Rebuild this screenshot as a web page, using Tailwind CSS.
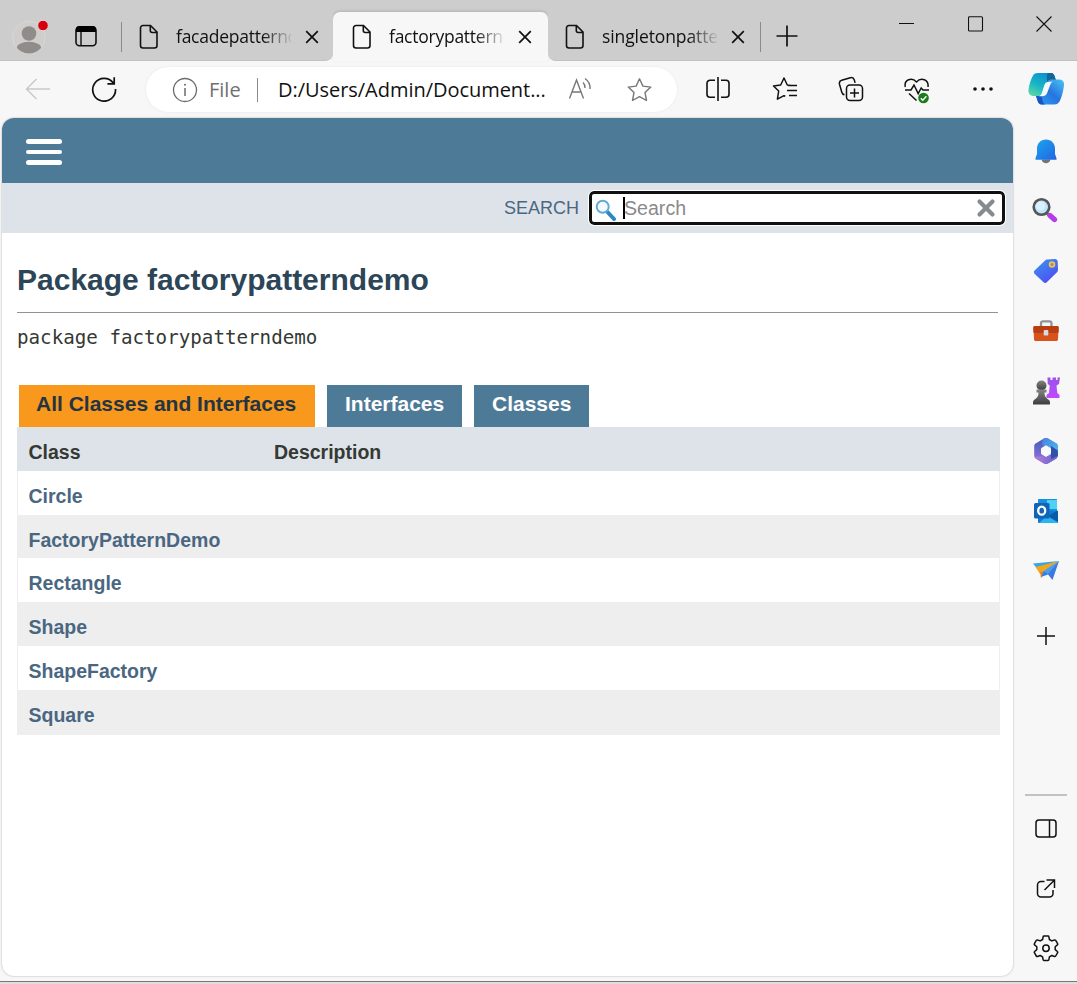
<!DOCTYPE html>
<html lang="en">
<head>
<meta charset="utf-8">
<title>factorypatterndemo</title>
<script src="https://cdn.jsdelivr.net/npm/@tailwindcss/browser@4"></script>
</head>
<body class="w-[1077px] h-[984px] overflow-hidden bg-[#f7f7f7] font-['Liberation_Sans',sans-serif] flex flex-col">
<svg class="hidden">
  <symbol id="doc" viewBox="0 0 20 26"><path d="M4 1.500h7.500l6.500 6.500v13.500a2.500 2.500 0 0 1-2.500 2.500H4a2.500 2.500 0 0 1-2.500-2.500V4A2.500 2.500 0 0 1 4 1.500zM11.300 1.800v4.700a2 2 0 0 0 2 2H18" fill="none" stroke="#111" stroke-width="1.600"/></symbol>
  <symbol id="close" viewBox="0 0 14 14"><path d="M1.200 1.200l11.600 11.600M12.800 1.200L1.200 12.800" fill="none" stroke="#111" stroke-width="1.700"/></symbol>
</svg>

<!-- title bar -->
<header class="h-[61px] flex shrink-0">
  <div class="w-[333px] bg-[#cdcdcd] rounded-br-lg border-b border-[#c2c2c2] flex items-center pt-[13px] relative">
    <svg class="ml-3 w-9 h-9 shrink-0" viewBox="0 0 36 36"><defs><clipPath id="av"><circle cx="17" cy="18.500" r="16"/></clipPath></defs><circle cx="17" cy="18.500" r="16.300" fill="#d0cecc" stroke="#dad8d6"/><g clip-path="url(#av)" fill="#8f8c89"><circle cx="17" cy="14.500" r="7.300"/><ellipse cx="17" cy="30" rx="12.500" ry="7.300"/></g><circle cx="31" cy="6.500" r="5.300" fill="#d9000d" stroke="#dedede"/></svg>
    <svg class="ml-[26px] -mt-px w-6 h-6 shrink-0" viewBox="0 0 24 24"><rect x="2" y="2.800" width="20" height="19" rx="3.500" fill="none" stroke="#111" stroke-width="1.600"/><path d="M2 8V5.500A3.500 3.500 0 0 1 5.500 2h13A3.500 3.500 0 0 1 22 5.500V8z" fill="#000"/><path d="M7 8v13.500" stroke="#111" stroke-width="1.400"/></svg>
    <div class="ml-[23px] w-px h-[30px] bg-[#8a8a8a]"></div>
    <svg class="ml-[17px] w-5 h-[26px] shrink-0"><use href="#doc"/></svg>
    <div class="ml-[17px] w-[115px] h-[30px] overflow-hidden whitespace-nowrap font-['Open_Sans',sans-serif] text-[17.500px] tracking-[-0.250px] leading-[29px] text-[#111] mask-r-from-75% mask-r-to-102%">facadepatterndemo</div>
    <svg class="ml-[14px] w-[14px] h-[14px] shrink-0"><use href="#close"/></svg>
  </div>
  <div class="w-[215px] bg-[#cdcdcd] pt-3 flex">
    <div class="w-[215px] rounded-t-[7px] bg-[#f7f7f7] shadow-[0_-1px_3px_#0002] flex items-center pt-px">
      <svg class="ml-[19px] w-5 h-[26px] shrink-0"><use href="#doc"/></svg>
      <div class="ml-[17px] w-[115px] h-[30px] overflow-hidden whitespace-nowrap font-['Open_Sans',sans-serif] text-[17.500px] tracking-[-0.250px] leading-[29px] text-[#111] mask-r-from-75% mask-r-to-102%">factorypatterndemo</div>
      <svg class="ml-[14px] w-[14px] h-[14px] shrink-0"><use href="#close"/></svg>
    </div>
  </div>
  <div class="flex-1 bg-[#cdcdcd] rounded-bl-lg border-b border-[#c2c2c2] flex items-start">
    <div class="flex items-center h-[61px] pt-[13px]">
      <svg class="ml-[17px] w-5 h-[26px] shrink-0"><use href="#doc"/></svg>
      <div class="ml-[17px] w-[115px] h-[30px] overflow-hidden whitespace-nowrap font-['Open_Sans',sans-serif] text-[17.500px] tracking-[-0.100px] leading-[29px] text-[#111] mask-r-from-75% mask-r-to-102%">singletonpatterndemo</div>
      <svg class="ml-[14px] w-[14px] h-[14px] shrink-0"><use href="#close"/></svg>
      <div class="ml-[15px] w-px h-[30px] bg-[#8a8a8a]"></div>
      <svg class="ml-[15px] mb-[3px] w-[22px] h-[22px]" viewBox="0 0 22 22"><path d="M11 .500v21M.500 11h21" stroke="#111" stroke-width="1.700"/></svg>
    </div>
    <svg class="ml-[101px] mt-4 w-4 h-4" viewBox="0 0 16 16"><path d="M0 7.500h15" stroke="#111"/></svg>
    <svg class="ml-[53px] mt-4 w-4 h-4" viewBox="0 0 16 16"><rect x=".500" y=".700" width="14" height="14.300" rx="1" fill="none" stroke="#111" stroke-width="1.100"/></svg>
    <svg class="ml-[52px] mt-4 w-4 h-4" viewBox="0 0 16 16"><path d="M.500.500l15 15M15.500.500l-15 15" stroke="#111" stroke-width="1.100"/></svg>
  </div>
</header>

<div class="flex h-[920px] shrink-0">
  <div class="w-[1014px] flex flex-col">
    <!-- toolbar -->
    <div class="h-[57px] shrink-0 flex items-center">
      <svg class="ml-[25px] -mt-[2px] w-[26px] h-[22px] shrink-0" viewBox="0 0 26 22"><path d="M25 11H1.500M11.500 1L1.500 11l10 10" fill="none" stroke="#c9c9c9" stroke-width="1.500"/></svg>
      <svg class="ml-[40px] -mt-[2px] w-[26px] h-[26px] shrink-0" viewBox="0 0 26 26"><path d="M22.300 7A11.400 11.400 0 1 0 24.500 13M23.200 1.300v6.500h-6.800" fill="none" stroke="#111" stroke-width="1.700"/></svg>
      <div class="ml-[29px] w-[531px] h-[45px] rounded-full bg-white shadow-[0_0_3px_#0001] flex items-center shrink-0 font-['Open_Sans',sans-serif] text-[20px] whitespace-nowrap">
        <svg class="ml-[26px] w-[26px] h-[26px] shrink-0" viewBox="0 0 26 26"><circle cx="13" cy="13" r="11.500" fill="none" stroke="#6b6b6b" stroke-width="1.300"/><path d="M13 11v8" stroke="#6b6b6b" stroke-width="1.500"/><circle cx="13" cy="7.700" r="1" fill="#6b6b6b"/></svg>
        <div class="ml-[11px] w-[33px] text-[#707070]">File</div>
        <div class="ml-[15px] w-px h-6 bg-[#8a8a8a]"></div>
        <div class="ml-5 w-[270px] tracking-[-0.040px] text-[#111]">D:/Users/Admin/Document...</div>
        <svg class="ml-[20px] -mt-px w-6 h-6 shrink-0" viewBox="0 0 24 24" fill="none" stroke="#777" stroke-width="1.400"><path d="M1.500 21.500L8.500 3l7 18.500M4 15h9M15 5.500c1.500 1.500 2.200 3.500 2 5.500M17 1.500c3.500 2.500 5.500 6 5 10.500"/></svg>
        <svg class="ml-[34px] w-[26px] h-[26px] shrink-0" viewBox="0 0 26 26"><path d="M13.500 1.800l3.400 7.300 7.900 1-5.800 5.500 1.500 7.900-7-3.900-7 3.900 1.500-7.900-5.800-5.500 7.900-1z" fill="none" stroke="#777" stroke-width="1.400" stroke-linejoin="round"/></svg>
      </div>
      <svg class="ml-[28px] -mt-[2px] w-[26px] h-[26px] shrink-0" viewBox="0 0 26 26" fill="none" stroke="#111" stroke-width="1.600"><path d="M10 4.300H5A3 3 0 0 0 2 7.300v10.900a3 3 0 0 0 3 3h5M16 4.300h5a3 3 0 0 1 3 3v10.900a3 3 0 0 1-3 3h-5M13 1v24"/></svg>
      <svg class="ml-[41px] -mt-px w-[26px] h-[26px] shrink-0" viewBox="0 0 26 26" fill="none" stroke="#111" stroke-width="1.500" stroke-linejoin="round"><path d="M19 9.500l-3.700-.500L12 2 8.700 9l-7.200 1 5.200 5-1.300 8.200 6.600-3.500 1.300.600M16 9.600h9M15 14.600h10M17 19.600h8"/></svg>
      <svg class="ml-[40px] -mt-px w-[26px] h-[26px] shrink-0" viewBox="0 0 26 26" fill="none" stroke="#111" stroke-width="1.500"><rect x="8.500" y="9" width="16" height="15.500" rx="3.500"/><path d="M16.500 12.500v9M12 17h9M6.500 18.700c-1.500-.200-2.300-1-2.700-2.500L1.500 8.200c-.500-1.900.300-3.300 2.200-3.900l8.600-2.600c1.900-.500 3.400.3 4 2.200l.800 3"/></svg>
      <svg class="ml-[40px] w-[26px] h-[28px] shrink-0" viewBox="0 0 26 28" fill="none" stroke="#111" stroke-width="1.500"><path d="M1.300 11C-.300 3.500 8 1 12.500 6 17 1 25 3.500 24 11M1 14h6l3-5 4.200 8.500 3-5.500 1.800 2h6M5 17.500l7.500 7"/><circle cx="19.500" cy="22" r="5.300" fill="#1b7a1b" stroke="none"/><path d="M16.800 22.200l2 2 3.600-3.900" stroke="#fff" stroke-width="1.400"/></svg>
      <svg class="ml-[42px] -mt-[2px] w-[22px] h-6 shrink-0" viewBox="0 0 22 24"><g fill="#111"><circle cx="3" cy="12" r="1.800"/><circle cx="11" cy="12" r="1.800"/><circle cx="19" cy="12" r="1.800"/></g></svg>
    </div>

    <!-- documentation page -->
    <main class="ml-[2px] w-[1011px] h-[858px] bg-white rounded-xl overflow-hidden shadow-[0_0_2px_#0005] text-[#353833]">
      <div class="h-[65px] bg-[#4d7a97] pt-[21px] pl-6 flex flex-col gap-[6px]">
        <div class="w-9 h-[5px] rounded-sm bg-white"></div>
        <div class="w-9 h-[4px] rounded-sm bg-white"></div>
        <div class="w-9 h-[5px] rounded-sm bg-white"></div>
      </div>
      <div class="h-[50px] bg-[#dee3e9] flex items-center">
        <label class="ml-[502px] mt-px w-[75px] text-[18px] text-[#4a6782]">SEARCH</label>
        <div class="ml-[10px] w-[416px] h-[34px] rounded-[5px] border-[3px] border-[#101010] outline-1 outline-white bg-white flex items-center">
          <svg class="ml-[3px] mt-[3px] w-[21px] h-[22px]" viewBox="0 0 21 22"><path d="M12.500 13l6.500 7" stroke="#2f86c0" stroke-width="4" stroke-linecap="round"/><circle cx="7.700" cy="7.700" r="6" fill="#f3f9fd" stroke="#62a9d8" stroke-width="2"/></svg>
          <div class="ml-[7px] w-[2px] h-[22px] bg-black"></div>
          <div class="w-[352px] -ml-px text-[19.600px] leading-6 text-[#8a8a8a]">Search</div>
          <svg class="w-[20px] h-[20px] -mt-px" viewBox="0 0 20 20"><path d="M3.500 3.500l13 13M16.500 3.500l-13 13" stroke="#858b8f" stroke-width="4.200" stroke-linecap="round"/></svg>
        </div>
      </div>
      <div class="pl-[15px] pt-[29px]">
        <h1 class="text-[30px] leading-[36px] font-bold text-[#2c4557]">Package factorypatterndemo</h1>
        <hr class="mt-[14px] w-[981px] border-[#929292]">
        <div class="mt-[12px] h-[26px] font-['DejaVu_Sans_Mono',monospace] text-[19.200px] leading-[26px]">package factorypatterndemo</div>
        <div class="mt-[34px] ml-[2px] flex gap-3 h-[42px] text-[21px] leading-[38px] font-bold text-white whitespace-nowrap">
          <div class="w-[296px] pl-[17px] bg-[#f8981d] text-[#253441]">All Classes and Interfaces</div>
          <div class="w-[135px] pl-[18px] bg-[#4d7a97]">Interfaces</div>
          <div class="w-[115px] pl-[18px] bg-[#4d7a97]">Classes</div>
        </div>
        <div class="w-[983px] border border-t-0 border-[#eee] text-[19.500px] leading-[50px] font-bold text-[#4a6782]">
          <div class="h-[44px] -mx-px px-[11.500px] bg-[#dee3e9] text-[#353833] flex"><span class="w-[245.500px]">Class</span><span>Description</span></div>
          <div class="h-[44px] pl-[10.500px]">Circle</div>
          <div class="h-[43px] pl-[10.500px] bg-[#eeeeef]">FactoryPatternDemo</div>
          <div class="h-[44px] pl-[10.500px]">Rectangle</div>
          <div class="h-[44px] pl-[10.500px] bg-[#eeeeef]">Shape</div>
          <div class="h-[44px] pl-[10.500px]">ShapeFactory</div>
          <div class="h-[44px] pl-[10.500px] bg-[#eeeeef]">Square</div>
        </div>
      </div>
    </main>
  </div>

  <!-- sidebar -->
  <aside class="w-[63px] flex flex-col items-center">
    <svg class="mt-[10px] w-9 h-9" viewBox="0 0 36 36"><defs><linearGradient id="c1" x1="0" y1="1" x2=".6" y2="0"><stop stop-color="#69dda0"/><stop offset=".5" stop-color="#17b5c5"/><stop offset="1" stop-color="#0b8fd0"/></linearGradient><linearGradient id="c2" x1="1" y1="0" x2="0" y2="1"><stop stop-color="#4ac6f2"/><stop offset=".5" stop-color="#2774e0"/><stop offset="1" stop-color="#28a5ef"/></linearGradient></defs><path d="M10 2h13c2.500 0 3.500 2 4.200 5l1.300 4h-5c-2 0-3 .8-3.500 2.500L16 25H6c-4 0-6-2.500-5.500-6.500C1.300 13 3 8 5 4.500 6.200 2.700 7.500 2 10 2z" fill="url(#c1)"/><path d="M20 2h3c2.500 0 3.500 2 4.200 5l1.300 4h-5c-2 0-3 .8-3.500 2.500-1-4-2-9 0-11.500z" fill="#126597"/><path d="M28 8.500h3c4 0 5.500 2.500 5 6-1 7-2.500 12.500-4.500 16-1.300 2-2.500 3-5 3H14c-3 0-4-2-4.500-4L8 25h4c2.500 0 3.500-1 4-3l3-10.500c.7-2 2-3 4-3z" fill="url(#c2)"/><path d="M8 25h5.500c1 2 .5 6 3.500 8.500h-3c-3 0-4-2-4.500-4z" fill="#1a55c8"/><path d="M16 15c.7-2.700 2.300-4.200 5.500-4.200H25c-1.700.7-2.400 1.700-3 3.700L19.500 21c-.9 3-2.500 4.200-5.500 4.200h-3c1.700-.7 2.500-1.700 3-3.700z" fill="#f4fbff"/></svg>
    <svg class="mt-[31px] w-[26px] h-[26px]" viewBox="0 0 26 26"><defs><linearGradient id="b" x2="1" y2="1"><stop stop-color="#19a7ee"/><stop offset="1" stop-color="#2463e3"/></linearGradient></defs><path d="M8.500 21.500h9c-1 5-8 5-9 0z" fill="#70757a"/><path d="M13 1.500c5.500 0 9 4 9 9v5.500l1.500 4.200c.3 1 0 1.500-1 1.500h-19c-1 0-1.300-.5-1-1.500L4 16v-5.500c0-5 3.500-9 9-9z" fill="url(#b)"/></svg>
    <svg class="mt-[33px] mr-px w-[26px] h-[26px]" viewBox="0 0 26 26"><path d="M14 15.500l4 3.500" stroke="#777" stroke-width="3"/><path d="M18 18.500l4.500 4" stroke="#b63bea" stroke-width="5.200" stroke-linecap="round"/><circle cx="9.500" cy="10" r="7.800" fill="#bfe3fa" stroke="#555" stroke-width="2.600"/><circle cx="8.500" cy="9" r="4.500" fill="#daf0ff"/></svg>
    <svg class="mt-[35px] w-[26px] h-[26px]" viewBox="0 0 26 26"><defs><linearGradient id="t" x1="0" y1="0" x2=".7" y2="1"><stop stop-color="#3c98f3"/><stop offset="1" stop-color="#4e4df0"/></linearGradient></defs><path d="M14.500 1.500L22 1c1.500 0 2.500 1 2.700 2.500l.3 8c0 1.200-.3 2-1 2.700L14 24c-1.200 1.200-2.500 1.200-3.700 0L1.800 16c-1.300-1.300-1.300-2.500 0-3.700l10-9.600c.8-.8 1.500-1.200 2.700-1.200z" fill="url(#t)"/><circle cx="19" cy="6.500" r="2.400" fill="#8a8fa0" stroke="#f1c34a" stroke-width="1.800"/></svg>
    <svg class="mt-[34px] w-[28px] h-[26px]" viewBox="0 0 28 26"><path d="M9 9V5.500C9 4 9.800 3.300 11 3.300h6.500c1.200 0 2 .7 2 2.200V9" fill="none" stroke="#8e9599" stroke-width="2.300"/><path d="M1.500 9.500C1.500 8.500 2 8 3 8h22c1 0 1.500.5 1.500 1.500L26 21c0 1.500-.7 2-2 2H4c-1.300 0-2-.5-2-2z" fill="#d8531c"/><path d="M1.300 9.500C1.300 8.500 2 8 3 8h22c1 0 1.700.5 1.700 1.500v4c0 1-.7 1.500-1.700 1.500H3c-1 0-1.700-.5-1.700-1.500z" fill="#b93f13"/><rect x="11.700" y="12" width="4.600" height="5.500" rx="1" fill="#d7dce0"/></svg>
    <svg class="mt-[32px] w-[28px] h-[30px]" viewBox="0 0 28 30"><defs><linearGradient id="k" y2="1" x2="0"><stop stop-color="#9b52e8"/><stop offset="1" stop-color="#c149ff"/></linearGradient><linearGradient id="p" y2="1" x2="0"><stop stop-color="#858585"/><stop offset="1" stop-color="#3d3d3d"/></linearGradient></defs><path d="M15.500 1.500h3V4h2V1.500h3.500V4h1.500V1.500H28l-1 6.500-2.500 1.500.8 7.500 2.200 2v3H14.500v-3l2.500-2 .7-7.500-2-1.500z" fill="url(#k)"/><circle cx="9.500" cy="9.500" r="5" fill="url(#p)"/><path d="M4.500 13.500h10v3h-2c0 4 1.500 5.500 4.500 7.500 1 .8 1 2 1 4.500H1c0-2.500 0-3.700 1-4.500 3-2 4.500-3.500 4.500-7.500h-2z" fill="url(#p)"/></svg>
    <svg class="mt-[31px] w-[26px] h-[28px]" viewBox="0 0 26 28"><defs><clipPath id="hx"><path d="M11 1.500c1.300-.7 2.700-.7 4 0l8 4.800c1.200.7 1.800 1.800 1.800 3.200v9c0 1.400-.6 2.500-1.800 3.200l-8 4.800c-1.300.7-2.700.7-4 0l-8-4.800C1.800 21 1.200 19.900 1.200 18.500v-9C1.200 8.100 1.800 7 3 6.300z"/></clipPath><linearGradient id="m1" y2="1" x2="0"><stop stop-color="#3c5bb8"/><stop offset="1" stop-color="#a078dc"/></linearGradient><linearGradient id="m2" x2="1" y2="1"><stop stop-color="#4a7fe0"/><stop offset="1" stop-color="#48c4ee"/></linearGradient><linearGradient id="m3" x2="1"><stop stop-color="#bd7ed8"/><stop offset="1" stop-color="#5a60cc"/></linearGradient></defs><g clip-path="url(#hx)"><path d="M0 0h26v28H0z" fill="url(#m1)"/><path d="M10 0h16v18l-7-4.500L9 7.500z" fill="url(#m2)"/><path d="M0 20l9-1 9 1 8-6v14H0z" fill="url(#m3)"/><path d="M18 9l8 5v4l-8 4z" fill="#2f4fa8"/></g><path d="M13 8.800l4.500 2.600v5.400L13 19.400l-4.500-2.600v-5.400z" fill="#f8f8ff" stroke="#f8f8ff" stroke-linejoin="round"/></svg>
    <svg class="mt-[33px] w-[26px] h-[26px]" viewBox="0 0 26 26"><path d="M6 1h17c.8 0 1 .4 1 1v11H5V2c0-.6.3-1 1-1z" fill="#1490df"/><path d="M14 2h10v9H14z" fill="#4fd0f5"/><path d="M5 12l20 1v11c0 .7-.3 1-1 1H6c-.7 0-1-.3-1-1z" fill="#1379cf"/><path d="M25 12.500v11.500L15 18z" fill="#0a5aa5"/><path d="M25 24.500L14 18l-8 7h18c.600 0 1-.2 1-.5z" fill="#2bb5f0"/><rect x="1" y="5" width="15.500" height="15.500" rx="1.500" fill="#0f64b9"/><ellipse cx="8.700" cy="12.700" rx="3.500" ry="4" fill="none" stroke="#fff" stroke-width="2.300"/></svg>
    <svg class="mt-[34px] w-[28px] h-[26px]" viewBox="0 0 28 26"><path d="M1 5.500L27 3 5 10.500z" fill="#35a6e8"/><path d="M27 3L3.500 9l4.500 7 2.500-2z" fill="#f2a51f"/><path d="M8 14l4-1-3 7.500z" fill="#e08a1a"/><path d="M27 3L11.500 13.500 9 19l7-2.500 4.500 5.500z" fill="#3a78e2"/><path d="M27 3L11.500 13l4.500 3z" fill="#46a0ea"/></svg>
    <svg class="mt-[43px] w-[18px] h-[18px]" viewBox="0 0 18 18"><path d="M9 0v18M0 9h18" stroke="#111" stroke-width="1.500"/></svg>
    <div class="mt-[149px] w-[42px] h-[2px] bg-[#c2c2c2]"></div>
    <svg class="mt-[20px] w-6 h-6" viewBox="0 0 24 24"><g fill="none" stroke="#111" stroke-width="1.500"><rect x="2" y="4" width="20" height="17" rx="3"/><path d="M15.500 4v17"/></g></svg>
    <svg class="mt-[36px] w-6 h-6" viewBox="0 0 24 24"><path d="M10.500 5.500H7A3.500 3.500 0 0 0 3.500 9v8.500A3.500 3.500 0 0 0 7 21h8.500a3.500 3.500 0 0 0 3.500-3.500V14M12.500 4h8v8M20.500 4l-10 10" fill="none" stroke="#111" stroke-width="1.500"/></svg>
    <svg class="mt-[34px] w-[28px] h-[28px]" viewBox="0 0 28 28"><path d="M12 2h4c.5 0 .8.300.9.800l.5 2.700 2.400 1.400 2.700-.900c.5-.200.900 0 1.200.400l1.900 3.300c.3.500.2.900-.2 1.200l-2.200 1.900v2.800l2.200 1.900c.4.300.5.800.2 1.200l-1.900 3.300c-.3.500-.7.600-1.200.500l-2.700-1-2.400 1.400-.5 2.700c-.1.500-.4.800-.9.800h-4c-.5 0-.8-.300-.9-.800l-.5-2.700-2.400-1.400-2.700 1c-.5.100-.9 0-1.200-.500l-1.900-3.300c-.3-.400-.2-.900.2-1.200l2.200-1.900v-2.800l-2.200-1.900c-.4-.300-.5-.700-.2-1.200l1.900-3.300c.3-.400.7-.600 1.200-.4l2.700.9 2.400-1.400.5-2.700c.1-.500.4-.8.9-.8z" fill="none" stroke="#111" stroke-width="1.500" stroke-linejoin="round"/><circle cx="14" cy="14.200" r="3.200" fill="none" stroke="#111" stroke-width="1.500"/></svg>
  </aside>
</div>
<footer class="h-[3px] bg-[#dedede] border-t border-[#777]"></footer>
</body>
</html>
